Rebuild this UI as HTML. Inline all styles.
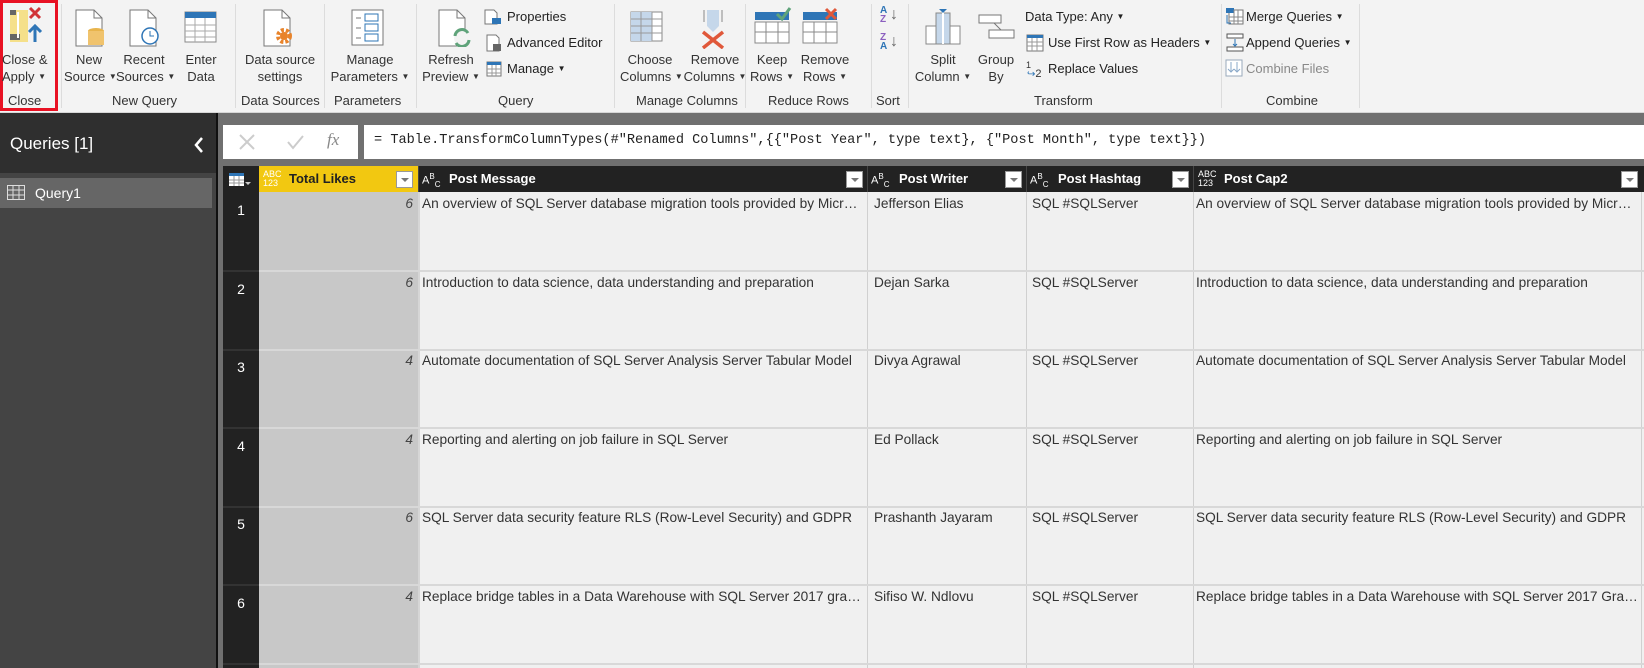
<!DOCTYPE html>
<html><head><meta charset="utf-8"><style>
*{margin:0;padding:0;box-sizing:border-box}
body{width:1644px;height:668px;overflow:hidden;background:#707070;font-family:"Liberation Sans",sans-serif;position:relative}
.a{position:absolute}
#rib{left:0;top:0;width:1644px;height:113px;background:#f3f3f3;border-bottom:1px solid #d6d6d6}
.sep{position:absolute;top:4px;width:1px;height:104px;background:#dcdcdc}
.lbl{position:absolute;font-size:13px;color:#333;text-align:center;line-height:17px;white-space:nowrap}
.gl{position:absolute;top:93px;font-size:13px;color:#333;white-space:nowrap}
.sm{position:absolute;font-size:13px;color:#222;white-space:nowrap}
.car{font-size:8px;vertical-align:2px}
.hd{position:absolute;top:166px;height:26px;background:#222;color:#fff;font-weight:bold;font-size:13px;line-height:26px}
.dd{position:absolute;top:5px;width:17px;height:17px;background:#fff;border:1px solid #999}
.dd:after{content:"";position:absolute;left:4px;top:6px;border:4px solid transparent;border-top:4px solid #777}
.ty{position:absolute;font-size:9px;line-height:9px;font-weight:normal}
.cell{position:absolute;font-size:13.7px;color:#333;white-space:nowrap;overflow:hidden;text-overflow:ellipsis}
</style></head><body>
<div id="rib" class="a">
 <div class="a" style="left:0;top:0;width:58px;height:111px;border:3px solid #e81123"></div>
 <svg class="a" style="left:8px;top:6px" width="36" height="40"><rect x="2" y="4" width="18" height="32" fill="#f5e08a"/><rect x="2" y="4" width="6" height="5" fill="#666"/><rect x="2" y="28" width="10" height="6" fill="#666"/><rect x="9" y="6" width="2" height="26" fill="#fff"/><path d="M22 2l10 10M32 2l-10 10" stroke="#d13438" stroke-width="3"/><path d="M27 36V20M21 26l6-6 6 6" stroke="#2e75b6" stroke-width="3" fill="none"/></svg>
 <div class="lbl" style="left:0;top:51px;width:50px;text-align:left;padding-left:2px">Close &amp;<br>Apply <span class="car">▼</span></div>
 <div class="gl" style="left:8px">Close</div>
 <div class="sep" style="left:61px"></div>
 <svg class="a" style="left:74px;top:9px" width="34" height="38"><path d="M2 1h18l8 8v28H2z" fill="#fff" stroke="#777"/><path d="M20 1v8h8" fill="none" stroke="#777"/><ellipse cx="22" cy="22" rx="8" ry="3" fill="#e8b44c"/><rect x="14" y="22" width="16" height="14" fill="#f0c36d"/></svg>
 <div class="lbl" style="left:64px;top:51px;width:50px">New<br>Source <span class="car">▼</span></div>
 <svg class="a" style="left:128px;top:9px" width="34" height="38"><path d="M2 1h18l8 8v28H2z" fill="#fff" stroke="#777"/><path d="M20 1v8h8" fill="none" stroke="#777"/><circle cx="22" cy="27" r="8" fill="#fff" stroke="#2e75b6" stroke-width="1.5"/><path d="M22 22v5h4" stroke="#2e75b6" fill="none"/></svg>
 <div class="lbl" style="left:116px;top:51px;width:56px">Recent<br>Sources <span class="car">▼</span></div>
 <svg class="a" style="left:184px;top:11px" width="34" height="34"><rect x="1" y="1" width="31" height="30" fill="#fff" stroke="#888"/><rect x="1" y="1" width="31" height="6" fill="#2e75b6"/><path d="M1 14h31M1 20h31M1 26h31M11 7v24M21 7v24" stroke="#aaa"/></svg>
 <div class="lbl" style="left:176px;top:51px;width:50px">Enter<br>Data</div>
 <div class="gl" style="left:112px">New Query</div>
 <div class="sep" style="left:235px"></div>
 <svg class="a" style="left:262px;top:9px" width="34" height="38"><path d="M2 1h18l8 8v28H2z" fill="#fff" stroke="#777"/><path d="M20 1v8h8" fill="none" stroke="#777"/><circle cx="22" cy="27" r="6" fill="none" stroke="#e8832a" stroke-width="4" stroke-dasharray="3 2"/><circle cx="22" cy="27" r="4" fill="#e8832a"/></svg>
 <div class="lbl" style="left:236px;top:51px;width:88px">Data source<br>settings</div>
 <div class="gl" style="left:241px">Data Sources</div>
 <div class="sep" style="left:324px"></div>
 <svg class="a" style="left:351px;top:9px" width="34" height="38"><rect x="1" y="1" width="31" height="35" fill="#fff" stroke="#777"/><path d="M5 9h5M5 19h5M5 29h5" stroke="#777"/><rect x="14" y="5" width="13" height="7" fill="none" stroke="#2e75b6"/><rect x="14" y="15" width="13" height="7" fill="none" stroke="#2e75b6"/><rect x="14" y="25" width="13" height="7" fill="none" stroke="#2e75b6"/></svg>
 <div class="lbl" style="left:326px;top:51px;width:88px">Manage<br>Parameters <span class="car">▼</span></div>
 <div class="gl" style="left:334px">Parameters</div>
 <div class="sep" style="left:416px"></div>
 <svg class="a" style="left:437px;top:9px" width="36" height="38"><path d="M2 1h18l8 8v28H2z" fill="#fff" stroke="#777"/><path d="M20 1v8h8" fill="none" stroke="#777"/><circle cx="25" cy="29" r="8" fill="#f3f3f3"/><path d="M18 27a7 7 0 0 1 13-3M32 31a7 7 0 0 1-13 3" stroke="#5fa37a" stroke-width="3" fill="none"/></svg>
 <div class="lbl" style="left:422px;top:51px;width:58px">Refresh<br>Preview <span class="car">▼</span></div>
 <svg class="a" style="left:484px;top:9px" width="18" height="16"><path d="M1 1h9l3 3v11H1z" fill="#fff" stroke="#777"/><rect x="8" y="9" width="9" height="6" fill="#2e75b6"/></svg>
 <div class="sm" style="left:507px;top:9px">Properties</div>
 <svg class="a" style="left:486px;top:34px" width="16" height="18"><path d="M1 1h9l3 3v13H1z" fill="#fff" stroke="#777"/><rect x="7" y="10" width="8" height="7" fill="#666"/></svg>
 <div class="sm" style="left:507px;top:35px">Advanced Editor</div>
 <svg class="a" style="left:486px;top:61px" width="16" height="16"><rect x="1" y="1" width="14" height="14" fill="#fff" stroke="#777"/><rect x="1" y="1" width="14" height="3" fill="#2e75b6"/><path d="M1 8h14M1 12h14M6 4v11M10 4v11" stroke="#999"/></svg>
 <div class="sm" style="left:507px;top:61px">Manage <span class="car">▼</span></div>
 <div class="gl" style="left:498px">Query</div>
 <div class="sep" style="left:614px"></div>
 <svg class="a" style="left:630px;top:11px" width="34" height="32"><rect x="1" y="1" width="31" height="29" fill="#fff" stroke="#888"/><rect x="1" y="1" width="21" height="29" fill="#c5d7ea"/><path d="M1 8h31M1 15h31M1 22h31M11 1v29M22 1v29" stroke="#999"/></svg>
 <div class="lbl" style="left:620px;top:51px;width:60px">Choose<br>Columns <span class="car">▼</span></div>
 <svg class="a" style="left:696px;top:9px" width="34" height="40"><path d="M8 1v12M26 1v12" stroke="#888"/><rect x="11" y="1" width="12" height="16" fill="#c5d7ea"/><path d="M11 17l6 6 6-6" fill="#c5d7ea"/><path d="M7 23l20 16M27 23L7 39" stroke="#e0583a" stroke-width="3.5"/></svg>
 <div class="lbl" style="left:682px;top:51px;width:66px">Remove<br>Columns <span class="car">▼</span></div>
 <div class="gl" style="left:636px">Manage Columns</div>
 <div class="sep" style="left:745px"></div>
 <svg class="a" style="left:754px;top:6px" width="38" height="40"><rect x="1" y="6" width="34" height="8" fill="#2e75b6"/><rect x="1" y="16" width="34" height="21" fill="#fff" stroke="#888"/><path d="M1 26h34M12 16v21M24 16v21" stroke="#888"/><path d="M23 8l5 5 8-11" stroke="#5fa37a" stroke-width="3" fill="none"/></svg>
 <div class="lbl" style="left:748px;top:51px;width:48px">Keep<br>Rows <span class="car">▼</span></div>
 <svg class="a" style="left:802px;top:6px" width="38" height="40"><rect x="1" y="6" width="34" height="8" fill="#2e75b6"/><rect x="1" y="16" width="34" height="21" fill="#fff" stroke="#888"/><path d="M1 26h34M12 16v21M24 16v21" stroke="#888"/><path d="M24 3l10 10M34 3L24 13" stroke="#e0583a" stroke-width="3"/></svg>
 <div class="lbl" style="left:796px;top:51px;width:58px">Remove<br>Rows <span class="car">▼</span></div>
 <div class="gl" style="left:768px">Reduce Rows</div>
 <div class="sep" style="left:871px"></div>
 <div class="a" style="left:880px;top:6px;font-size:10px;line-height:9px;color:#2e75b6;font-weight:bold">A<br><span style="color:#8b5fbf">Z</span></div>
 <div class="a" style="left:890px;top:6px;font-size:16px;color:#666">↓</div>
 <div class="a" style="left:880px;top:33px;font-size:10px;line-height:9px;color:#8b5fbf;font-weight:bold">Z<br><span style="color:#2e75b6">A</span></div>
 <div class="a" style="left:890px;top:33px;font-size:16px;color:#666">↓</div>
 <div class="gl" style="left:876px">Sort</div>
 <div class="sep" style="left:908px"></div>
 <svg class="a" style="left:924px;top:8px" width="38" height="38"><rect x="2" y="18" width="34" height="18" fill="#fff" stroke="#888"/><rect x="12" y="5" width="14" height="31" fill="#c5d7ea" stroke="#888"/><path d="M19 1v35" stroke="#fff" stroke-width="2"/><path d="M15 1h8l-4 4z" fill="#2e75b6"/></svg>
 <div class="lbl" style="left:914px;top:51px;width:58px">Split<br>Column <span class="car">▼</span></div>
 <svg class="a" style="left:978px;top:14px" width="38" height="26"><rect x="1" y="1" width="22" height="8" fill="#fff" stroke="#777"/><rect x="11" y="16" width="25" height="8" fill="#fff" stroke="#777"/><path d="M16 9l7 7" stroke="#777"/></svg>
 <div class="lbl" style="left:976px;top:51px;width:40px">Group<br>By</div>
 <div class="sm" style="left:1025px;top:9px">Data Type: Any <span class="car">▼</span></div>
 <svg class="a" style="left:1026px;top:34px" width="18" height="18"><rect x="1" y="1" width="16" height="16" fill="#fff" stroke="#777"/><rect x="1" y="1" width="16" height="3" fill="#2e75b6"/><path d="M1 8h16M1 12h16M6 4v13M11 4v13" stroke="#999"/></svg>
 <div class="sm" style="left:1048px;top:35px">Use First Row as Headers <span class="car">▼</span></div>
 <div class="a" style="left:1026px;top:60px;font-size:9px;color:#333">1</div>
 <div class="a" style="left:1027px;top:68px;font-size:10px;color:#2e75b6">↪<span style="color:#333;font-size:11px">2</span></div>
 <div class="sm" style="left:1048px;top:61px">Replace Values</div>
 <div class="gl" style="left:1034px">Transform</div>
 <div class="sep" style="left:1221px"></div>
 <svg class="a" style="left:1225px;top:7px" width="20" height="20"><rect x="4" y="3" width="14" height="14" fill="#fff" stroke="#777"/><rect x="1" y="1" width="8" height="5" fill="#2e75b6"/><path d="M4 10h14M4 14h14M9 3v14M13 3v14" stroke="#888"/><path d="M2 8v8h4" stroke="#2e75b6" fill="none"/></svg>
 <div class="sm" style="left:1246px;top:9px">Merge Queries <span class="car">▼</span></div>
 <svg class="a" style="left:1225px;top:33px" width="20" height="20"><rect x="2" y="1" width="16" height="4" fill="#fff" stroke="#555"/><rect x="2" y="14" width="16" height="4" fill="#fff" stroke="#555"/><path d="M10 6v7M8 11l2 2 2-2" stroke="#2e75b6" fill="none"/></svg>
 <div class="sm" style="left:1246px;top:35px">Append Queries <span class="car">▼</span></div>
 <svg class="a" style="left:1225px;top:59px" width="18" height="18"><rect x="1" y="1" width="16" height="16" fill="#fff" stroke="#9ab"/><path d="M6 3v10M3 10l3 3 3-3M12 3v10M9 10l3 3 3-3" stroke="#8aa8c8" fill="none"/></svg>
 <div class="sm" style="left:1246px;top:61px;color:#888">Combine Files</div>
 <div class="gl" style="left:1266px">Combine</div>
 <div class="sep" style="left:1359px"></div>
</div>
<div class="a" style="left:0;top:113px;width:216px;height:555px;background:#444"></div>
<div class="a" style="left:0;top:113px;width:216px;height:60px;background:#2f2f2f"></div>
<div class="a" style="left:216px;top:113px;width:2px;height:555px;background:#111"></div>
<div class="a" style="left:10px;top:134px;color:#fff;font-size:17px">Queries [1]</div>
<svg class="a" style="left:193px;top:136px" width="12" height="18"><path d="M9 2L3 9l6 7" stroke="#fff" stroke-width="2.5" fill="none"/></svg>
<div class="a" style="left:0;top:178px;width:212px;height:30px;background:#666"></div>
<svg class="a" style="left:7px;top:185px" width="18" height="15"><rect x="0.5" y="0.5" width="17" height="14" fill="none" stroke="#ddd"/><path d="M0 5h18M0 10h18M6 0v15M12 0v15" stroke="#ddd"/></svg>
<div class="a" style="left:35px;top:185px;color:#fff;font-size:14px">Query1</div>
<div class="a" style="left:223px;top:125px;width:135px;height:34px;background:#fff"></div>
<svg class="a" style="left:237px;top:132px" width="20" height="20"><path d="M3 3l14 14M17 3L3 17" stroke="#ccc" stroke-width="2"/></svg>
<svg class="a" style="left:285px;top:132px" width="20" height="20"><path d="M3 10l5 6 10-12" stroke="#ccc" stroke-width="2" fill="none"/></svg>
<div class="a" style="left:327px;top:130px;font-family:'Liberation Serif',serif;font-style:italic;font-size:17px;color:#888">fx</div>
<div class="a" style="left:364px;top:125px;width:1280px;height:34px;background:#fff"></div>
<div class="a" style="left:374px;top:133px;font-family:'Liberation Mono',monospace;font-size:13.6px;color:#222;white-space:pre">= Table.TransformColumnTypes(#"Renamed Columns",{{"Post Year", type text}, {"Post Month", type text}})</div>
<div class="a" style="left:223px;top:166px;width:1421px;height:502px;background:#f0f0f0"></div>
<div class="a" style="left:223px;top:166px;width:36px;height:502px;background:#222"></div>
<div class="a" style="left:259px;top:192px;width:159px;height:476px;background:#c8c8c8"></div>
<div class="hd" style="left:223px;width:36px"><svg style="position:absolute;left:6px;top:7px" width="22" height="14"><rect x="0" y="0" width="15" height="13" fill="#fff"/><rect x="0" y="0" width="15" height="3" fill="#2e75b6"/><path d="M0 7h15M0 10h15M5 3v10M10 3v10" stroke="#999"/><path d="M16 9h6l-3 3z" fill="#ccc"/></svg></div>
<div class="hd" style="left:259px;width:159px;background:#f2c811;color:#222"><div class="ty" style="left:4px;top:4px;color:#fff">ABC<br>123</div><span style="position:absolute;left:30px">Total Likes</span><div class="dd" style="left:137px"></div></div>
<div class="hd" style="left:418px;width:449px;border-left:1px solid #444"><div class="ty" style="left:3px;top:6px;font-size:11px">A<sup style="font-size:8px">B</sup><sub style="font-size:8px">C</sub></div><span style="position:absolute;left:30px">Post Message</span><div class="dd" style="left:427px"></div></div>
<div class="hd" style="left:867px;width:159px;border-left:1px solid #444"><div class="ty" style="left:3px;top:6px;font-size:11px">A<sup style="font-size:8px">B</sup><sub style="font-size:8px">C</sub></div><span style="position:absolute;left:31px">Post Writer</span><div class="dd" style="left:137px"></div></div>
<div class="hd" style="left:1026px;width:167px;border-left:1px solid #444"><div class="ty" style="left:3px;top:6px;font-size:11px">A<sup style="font-size:8px">B</sup><sub style="font-size:8px">C</sub></div><span style="position:absolute;left:31px">Post Hashtag</span><div class="dd" style="left:145px"></div></div>
<div class="hd" style="left:1193px;width:451px;border-left:1px solid #444"><div class="ty" style="left:4px;top:4px">ABC<br>123</div><span style="position:absolute;left:30px">Post Cap2</span><div class="dd" style="left:427px"></div></div>
<div class="a" style="left:418px;top:192px;width:2px;height:476px;background:#d6d6d6"></div>
<div class="a" style="left:867px;top:192px;width:1px;height:476px;background:#d0d0d0"></div>
<div class="a" style="left:1026px;top:192px;width:1px;height:476px;background:#d0d0d0"></div>
<div class="a" style="left:1193px;top:192px;width:1px;height:476px;background:#d0d0d0"></div>
<div class="a" style="left:1641px;top:192px;width:1px;height:476px;background:#d0d0d0"></div>
<div id="rows"></div>
<script>
var d=[["6","An overview of SQL Server database migration tools provided by Microsoft","Jefferson Elias","An overview of SQL Server database migration tools provided by Microsoft"],
["6","Introduction to data science, data understanding and preparation","Dejan Sarka","Introduction to data science, data understanding and preparation"],
["4","Automate documentation of SQL Server Analysis Server Tabular Model","Divya Agrawal","Automate documentation of SQL Server Analysis Server Tabular Model"],
["4","Reporting and alerting on job failure in SQL Server","Ed Pollack","Reporting and alerting on job failure in SQL Server"],
["6","SQL Server data security feature RLS (Row-Level Security) and GDPR","Prashanth Jayaram","SQL Server data security feature RLS (Row-Level Security) and GDPR"],
["4","Replace bridge tables in a Data Warehouse with SQL Server 2017 graph database","Sifiso W. Ndlovu","Replace bridge tables in a Data Warehouse with SQL Server 2017 Graph database"]];
var h="";
for(var i=0;i<6;i++){var t=192+i*78.5;var r=d[i];
h+='<div class="a" style="left:223px;top:'+(t+78)+'px;width:1421px;height:2px;background:#d8d8d8"></div>';
h+='<div class="a" style="left:223px;top:'+(t+78)+'px;width:36px;height:2px;background:#333"></div>';
h+='<div class="cell" style="left:223px;width:36px;text-align:center;top:'+(t+10)+'px;color:#fff;font-size:14px">'+(i+1)+'</div>';
h+='<div class="cell" style="left:259px;width:154px;text-align:right;font-style:italic;top:'+(t+4)+'px;color:#444">'+r[0]+'</div>';
h+='<div class="cell" style="left:422px;width:442px;top:'+(t+4)+'px">'+r[1]+'</div>';
h+='<div class="cell" style="left:874px;width:150px;top:'+(t+4)+'px">'+r[2]+'</div>';
h+='<div class="cell" style="left:1032px;width:158px;top:'+(t+4)+'px">SQL #SQLServer</div>';
h+='<div class="cell" style="left:1196px;width:442px;top:'+(t+4)+'px">'+r[3]+'</div>';}
document.getElementById("rows").innerHTML=h;
</script>
</body></html>
